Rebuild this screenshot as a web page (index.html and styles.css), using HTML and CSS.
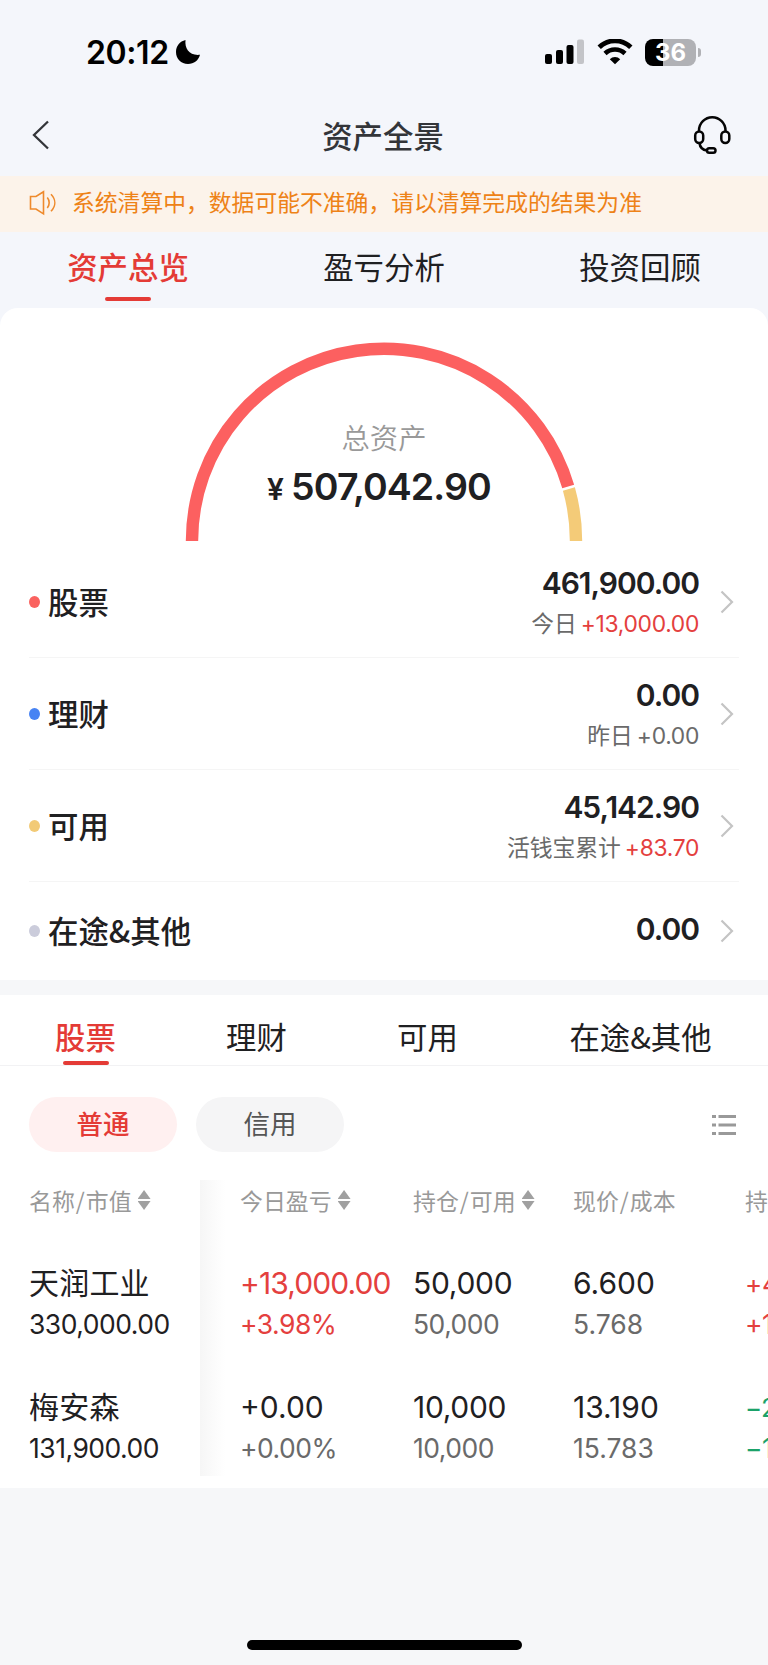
FILE: index.html
```
<!DOCTYPE html>
<html lang="zh-CN">
<head>
    <meta charset="UTF-8">
    <meta name="viewport" content="width=device-width, initial-scale=1.0">
    <title>资产全景</title>
    <link rel="stylesheet" href="styles.css">
</head>
<body>
    <div class="status-bar">
        <div class="clock">
            <span class="time">20:12</span>
            <svg class="moon" width="26" height="26" viewBox="0 0 26 26"><path d="M10.500 1C9.500 9.500 14.500 17 25 15.800C23.500 21.500 19 25 13 25C6 25 1 19.800 1 13C1 7 4.800 2.300 10.500 1Z"/></svg>
        </div>
        <div class="status-icons">
            <svg class="signal" width="40" height="26" viewBox="0 0 40 26">
                <rect x="0" y="15" width="7" height="10" rx="2"/>
                <rect x="11" y="11" width="7" height="14" rx="2"/>
                <rect x="21.500" y="6" width="7" height="19" rx="2"/>
                <rect x="32" y="0.500" width="7" height="24.500" rx="2" fill="#c3c4c8"/>
            </svg>
            <svg class="wifi" width="36" height="26" viewBox="0 0 36 26">
                <path d="M2.200 8.300A22.500 22.500 0 0 1 33.800 8.300" fill="none" stroke="#000" stroke-width="4.800"/>
                <path d="M8 14.500A14.500 14.500 0 0 1 28 14.500" fill="none" stroke="#000" stroke-width="4.600"/>
                <path d="M12.800 20.200A7.500 7.500 0 0 1 23.200 20.200L18 25.300Z"/>
            </svg>
            <div class="battery"><span>36</span></div>
        </div>
    </div>

    <div class="nav-bar">
        <svg class="back" width="18" height="30" viewBox="0 0 18 30"><path d="M16 1.500L2 15L16 28.500" fill="none" stroke="#333539" stroke-width="2.300"/></svg>
        <h1>资产全景</h1>
        <svg class="service" width="38" height="40" viewBox="0 0 38 40" fill="none" stroke="#050505" stroke-width="2.500">
            <path d="M6 16V14.500a13.200 13.200 0 0 1 26.500 0V16"/>
            <rect x="2.200" y="15.500" width="8" height="11.500" rx="4"/>
            <rect x="28.300" y="15.500" width="8" height="11.500" rx="4"/>
            <path d="M6.500 27C7 31.500 9.800 34 14 34.500"/>
            <rect x="14" y="32.200" width="8.500" height="4.600" rx="2.300"/>
        </svg>
    </div>

    <div class="notice">
        <svg width="28" height="26" viewBox="0 0 28 26" fill="none" stroke="#ee8a2c" stroke-width="1.600">
            <path d="M1.500 6.500H7L14.500 1.800V23.800L7 19H1.500Z"/>
            <path d="M18.300 7.500C20.800 10.500 20.800 15 18.300 18"/>
            <path d="M22 4.200C27 9.500 27 16 22 21.300"/>
        </svg>
        <span>系统清算中，数据可能不准确，请以清算完成的结果为准</span>
    </div>

    <div class="main-tabs">
        <div class="tab active">资产总览</div>
        <div class="tab">盈亏分析</div>
        <div class="tab">投资回顾</div>
    </div>

    <div class="overview">
        <div class="gauge">
            <svg width="398" height="200" viewBox="0 0 398 200" fill="none" stroke-width="12.400">
                <path d="M7 199A192 192 0 0 1 383.200 144.600" stroke="#fc6060"/>
                <path d="M383.900 147A192 192 0 0 1 391 199" stroke="#f4cb78"/>
            </svg>
            <div class="total">
                <div class="total-label">总资产</div>
                <div class="total-value"><span>¥</span>507,042.90</div>
            </div>
        </div>

        <div class="asset-row">
            <i class="dot red"></i>
            <div class="asset-name">股票</div>
            <div class="asset-value">
                <b>461,900.00</b>
                <p>今日<em class="up">+13,000.00</em></p>
            </div>
            <svg class="arrow" width="14" height="24" viewBox="0 0 14 24"><path d="M1.500 1.500L12 12L1.500 22.500"/></svg>
        </div>
        <div class="asset-row">
            <i class="dot blue"></i>
            <div class="asset-name">理财</div>
            <div class="asset-value">
                <b>0.00</b>
                <p>昨日<em>+0.00</em></p>
            </div>
            <svg class="arrow" width="14" height="24" viewBox="0 0 14 24"><path d="M1.500 1.500L12 12L1.500 22.500"/></svg>
        </div>
        <div class="asset-row">
            <i class="dot yellow"></i>
            <div class="asset-name">可用</div>
            <div class="asset-value">
                <b>45,142.90</b>
                <p>活钱宝累计<em class="up">+83.70</em></p>
            </div>
            <svg class="arrow" width="14" height="24" viewBox="0 0 14 24"><path d="M1.500 1.500L12 12L1.500 22.500"/></svg>
        </div>
        <div class="asset-row last">
            <i class="dot gray"></i>
            <div class="asset-name">在途&amp;其他</div>
            <div class="asset-value">
                <b>0.00</b>
            </div>
            <svg class="arrow" width="14" height="24" viewBox="0 0 14 24"><path d="M1.500 1.500L12 12L1.500 22.500"/></svg>
        </div>
    </div>

    <div class="holdings">
        <div class="sub-tabs">
            <div class="tab active">股票</div>
            <div class="tab">理财</div>
            <div class="tab">可用</div>
            <div class="tab wide">在途&amp;其他</div>
        </div>

        <div class="filters">
            <div class="pill active">普通</div>
            <div class="pill">信用</div>
            <svg width="24" height="22" viewBox="0 0 24 22" fill="#999">
                <path d="M0 1h4v3H0zM6.500 1H24v3H6.500zM0 9.500h4v3H0zM6.500 9.500H24v3H6.500zM0 18h4v3H0zM6.500 18H24v3H6.500z"/>
            </svg>
        </div>

        <div class="table">
            <div class="col name-col">
                <div class="th"><span>名称<s>/</s>市值</span><i class="sort"></i></div>
                <div class="cell">
                    <div class="stock">天润工业</div>
                    <div class="small dark">330,000.00</div>
                </div>
                <div class="cell">
                    <div class="stock">梅安森</div>
                    <div class="small dark">131,900.00</div>
                </div>
            </div>
            <div class="col profit-col">
                <div class="th"><span>今日盈亏</span><i class="sort"></i></div>
                <div class="cell up">
                    <div class="big">+13,000.00</div>
                    <div class="small">+3.98%</div>
                </div>
                <div class="cell">
                    <div class="big">+0.00</div>
                    <div class="small">+0.00%</div>
                </div>
            </div>
            <div class="col hold-col">
                <div class="th"><span>持仓<s>/</s>可用</span><i class="sort"></i></div>
                <div class="cell">
                    <div class="big">50,000</div>
                    <div class="small">50,000</div>
                </div>
                <div class="cell">
                    <div class="big">10,000</div>
                    <div class="small">10,000</div>
                </div>
            </div>
            <div class="col price-col">
                <div class="th"><span>现价<s>/</s>成本</span></div>
                <div class="cell">
                    <div class="big">6.600</div>
                    <div class="small">5.768</div>
                </div>
                <div class="cell">
                    <div class="big">13.190</div>
                    <div class="small">15.783</div>
                </div>
            </div>
            <div class="col more-col">
                <div class="th"><span>持</span></div>
                <div class="cell up">
                    <div class="big mid">+4</div>
                    <div class="small">+1</div>
                </div>
                <div class="cell down">
                    <div class="big mid">−2</div>
                    <div class="small">−1</div>
                </div>
            </div>
        </div>
    </div>

    <div class="home-indicator"></div>
</body>
</html>
```
FILE: styles.css
```
* {
    box-sizing: border-box;
    margin: 0;
    padding: 0;
}

body {
    width: 768px;
    height: 1665px;
    display: flex;
    flex-direction: column;
    overflow: hidden;
    background: linear-gradient(#f4f6fb 400px, #f6f7f9 400px);
    color: #1f2022;
    font-family: Inter, "Noto Sans CJK SC", sans-serif;
}

i, em {
    font-style: normal;
}

svg {
    display: block;
    flex: none;
}

.status-bar {
    height: 104px;
    padding: 0 72px 0 86px;
    display: flex;
    align-items: center;
    justify-content: space-between;
    color: #000;
}

.clock {
    display: flex;
    align-items: center;
    gap: 6px;
}

.time {
    font-size: 32px;
    font-weight: 600;
    letter-spacing: -0.4px;
}

.status-icons {
    display: flex;
    align-items: center;
    gap: 12px;
}

.battery {
    width: 51px;
    height: 27px;
    border-radius: 8px;
    background: linear-gradient(90deg, #000 36%, #b0b1b5 36%);
    color: #fff;
    font-size: 24px;
    font-weight: 700;
    line-height: 27px;
    text-align: center;
    position: relative;
}

.battery::after {
    content: "";
    position: absolute;
    right: -5px;
    top: 9px;
    width: 3px;
    height: 9px;
    border-radius: 0 4px 4px 0;
    background-color: #b0b1b5;
}

.nav-bar {
    height: 72px;
    padding: 0 37px 10px 32px;
    display: flex;
    align-items: center;
    justify-content: space-between;
}

.nav-bar .service {
    margin: 2px 0 0 -20px;
}

h1 {
    margin-left: 3px;
    color: #333539;
    font-family: "Noto Sans CJK SC", sans-serif;
    font-size: 30.4px;
    font-weight: 500;
    line-height: 44px;
}

.notice {
    height: 56px;
    padding: 0 29px 2px;
    display: flex;
    align-items: center;
    gap: 15px;
    background-color: #fcf3ea;
    color: #ee8217;
    font-size: 22.8px;
    line-height: 32px;
    white-space: nowrap;
}

.main-tabs {
    height: 76px;
    display: flex;
}

.tab {
    flex: 1;
    text-align: center;
    font-family: "Noto Sans CJK SC", sans-serif;
    font-size: 30.4px;
    line-height: 44px;
    position: relative;
}

.main-tabs .tab {
    padding-top: 12px;
}

.tab.active {
    color: #e43b36;
    font-weight: 500;
}

.tab.active::after {
    content: "";
    position: absolute;
    left: 50%;
    bottom: 7px;
    width: 46px;
    height: 4px;
    margin-left: -23px;
    border-radius: 2px;
    background-color: #e43b36;
}

.overview {
    height: 672px;
    border-radius: 18px 18px 0 0;
    background-color: #fff;
}

.gauge {
    height: 238px;
    padding-top: 34px;
    display: flex;
    justify-content: center;
    position: relative;
}

.total {
    position: absolute;
    top: 109px;
    left: 0;
    width: 100%;
    text-align: center;
}

.total-label {
    color: #999;
    font-size: 28.3px;
    font-weight: 350;
    line-height: 44px;
}

.total-value {
    margin-left: -10px;
    font-size: 37.5px;
    font-weight: 600;
    line-height: 52px;
    letter-spacing: -0.9px;
}

.total-value span {
    margin-right: 8px;
    font-size: 30px;
}

.asset-row {
    height: 112px;
    margin: 0 29px;
    padding-right: 5px;
    display: flex;
    align-items: center;
    border-bottom: 1px solid #f5f5f5;
}

.asset-row.last {
    height: 98px;
    border-bottom: none;
}

.dot {
    width: 11px;
    height: 12px;
    border-radius: 50%;
}

.red { background-color: #fa625f; }
.blue { background-color: #4783f3; }
.yellow { background-color: #f2ca76; }
.gray { background-color: #cbccdb; }

.asset-name {
    flex: 1;
    margin-left: 8px;
    padding-bottom: 2px;
    font-family: "Noto Sans CJK SC", sans-serif;
    font-size: 30.4px;
    font-weight: 500;
    line-height: 44px;
}

.asset-value {
    margin-right: 21px;
    padding-top: 3px;
    text-align: right;
}

.last .asset-value {
    padding: 0 0 4px;
}

.asset-value b {
    display: block;
    font-size: 30px;
    font-weight: 600;
    line-height: 40px;
    letter-spacing: -1px;
}

.asset-value p {
    color: #6a6a6a;
    font-size: 22.8px;
    line-height: 41px;
}

.asset-value em {
    margin-left: 4px;
    letter-spacing: -0.3px;
}

.up, .asset-value .up {
    color: #e4403e;
}

.arrow path {
    fill: none;
    stroke: #c4c4c4;
    stroke-width: 2.200;
}

.holdings {
    height: 493px;
    margin-top: 15px;
    background-color: #fff;
}

.sub-tabs {
    height: 71px;
    display: flex;
    border-bottom: 1px solid #f2f2f4;
}

.sub-tabs .tab {
    flex: none;
    width: 171px;
    padding-top: 19px;
}

.sub-tabs .tab.wide {
    width: 255px;
}

.sub-tabs .tab.active::after {
    bottom: 0;
}

.filters {
    height: 55px;
    margin: 31px 32px 0 29px;
    display: flex;
    align-items: center;
    gap: 19px;
}

.filters svg {
    margin-left: auto;
}

.pill {
    width: 148px;
    height: 55px;
    border-radius: 28px;
    background-color: #f5f5f6;
    color: #555;
    font-size: 26.5px;
    line-height: 55px;
    text-align: center;
}

.pill.active {
    background-color: #fff0f0;
    color: #e43b36;
    font-weight: 500;
}

.table {
    height: 336px;
    display: flex;
    overflow: hidden;
    white-space: nowrap;
}

.col {
    flex: none;
    padding-top: 32px;
}

.name-col {
    width: 200px;
    padding-left: 29px;
}

.profit-col {
    width: 213px;
    padding-left: 40px;
    background: linear-gradient(90deg, #f6f6f6, #fff 25px) no-repeat 0 28px / 100% 296px;
}

.profit-col .big {
    letter-spacing: -0.9px;
}

.profit-col .cell:last-child .big {
    letter-spacing: 0;
}

.hold-col { width: 160px; }
.price-col { width: 172px; }

.price-col .big, .price-col .small {
    letter-spacing: 0;
}

.th {
    height: 32px;
    margin-bottom: 46px;
    display: flex;
    align-items: center;
    gap: 6px;
    color: #999;
    font-family: "Noto Sans CJK SC", sans-serif;
    font-size: 22.9px;
    line-height: 32px;
}

.th s {
    margin: 0 1px;
    text-decoration: none;
}

/* up and down triangles */
.sort::before, .sort::after {
    content: "";
    display: block;
    width: 13px;
    height: 9px;
    background-color: #a0a0a0;
    clip-path: polygon(50% 0, 100% 100%, 0 100%);
}

.sort::after {
    margin-top: 2px;
    clip-path: polygon(0 0, 100% 0, 50% 100%);
}

.cell {
    height: 124px;
}

.stock, .big {
    height: 42px;
    font-size: 30px;
    line-height: 43px;
    letter-spacing: -0.3px;
}

.stock {
    letter-spacing: 0.2px;
}

.mid {
    font-size: 26px;
}

.small {
    color: #6a6a6a;
    font-size: 26.5px;
    line-height: 40px;
    letter-spacing: -0.5px;
}

.small.dark {
    color: #1f2022;
}

.up .small { color: #e4403e; }

.down, .down .small { color: #1ba269; }

.home-indicator {
    width: 275px;
    height: 10px;
    margin: 152px auto 0;
    border-radius: 5px;
    background-color: #000;
}
```
